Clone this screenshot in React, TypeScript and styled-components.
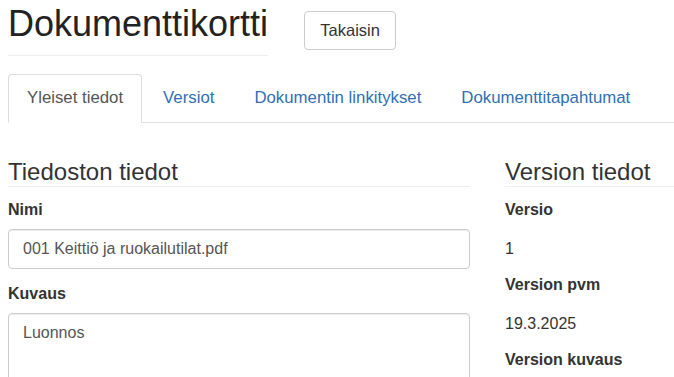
import React from "react";
import styled, {createGlobalStyle} from "styled-components";

const GlobalStyle = createGlobalStyle`
  html, body {
    margin: 0;
    padding: 0;
    overflow: hidden;
    background: #fff;
  }

  body {
    font-family: "Liberation Sans", Arial, Helvetica, sans-serif;
    font-size: 16px;
    line-height: 24px;
    color: #333;
  }
`;

const Page = styled.div`
  min-width: 1000px;
  padding-left: 8px;
`;

const Header = styled.div`
  display: flex;
  align-items: flex-start;
  gap: 36px;
`;

const Title = styled.h1`
  margin: 0;
  padding: 4px 0 11px;
  font-size: 36px;
  font-weight: 400;
  line-height: 40px;
  color: #222;
  border-bottom: 1px solid #eee;
`;

const Button = styled.button`
  box-sizing: border-box;
  width: 92px;
  margin-top: 11px;
  padding: 7px 0;
  font-family: inherit;
  font-size: 16.5px;
  line-height: 23px;
  color: #333;
  background: #fff;
  border: 1px solid #ccc;
  border-radius: 4px;
  cursor: pointer;
`;

const TabList = styled.ul`
  display: flex;
  list-style: none;
  margin: 18px 0 0;
  padding: 0;
  border-bottom: 1px solid #ddd;
`;

const Tab = styled.li<{ $active?: boolean }>`
  margin: 0 2px -1px 0;
  padding: 11px 18px 12px;
  font-size: 16.8px;
  border: 1px solid ${p => (p.$active ? "#ddd" : "transparent")};
  border-bottom-color: transparent;
  border-radius: 4px 4px 0 0;
  background: ${p => (p.$active ? "#fff" : "transparent")};
  color: ${p => (p.$active ? "#555" : "#2f6fb4")};
  cursor: pointer;
`;

const Content = styled.div`
  display: grid;
  grid-template-columns: 462px 1fr;
  column-gap: 35px;
  padding-top: 35px;
`;

const Section = styled.section``;

const SectionTitle = styled.h3`
  margin: 0;
  padding-bottom: 1px;
  font-size: 24px;
  font-weight: 400;
  line-height: 27px;
  color: #333;
  border-bottom: 1px solid #eee;
`;

const Fields = styled.div`
  margin-top: 11px;
`;

const FormGroup = styled.div`
  margin-bottom: 13px;
`;

const Label = styled.label`
  display: block;
  margin: 0 0 7px;
  font-weight: 700;
`;

const Input = styled.input`
  box-sizing: border-box;
  display: block;
  width: 100%;
  height: 40px;
  padding: 7px 14px;
  font-family: inherit;
  font-size: 16px;
  line-height: 24px;
  color: #555;
  border: 1px solid #ccc;
  border-radius: 4px;
  box-shadow: inset 0 1px 1px rgba(0, 0, 0, 0.075);
`;

const TextArea = styled.textarea`
  box-sizing: border-box;
  display: block;
  width: 100%;
  height: 110px;
  padding: 7px 14px;
  font-family: inherit;
  font-size: 16px;
  line-height: 24px;
  color: #555;
  border: 1px solid #ccc;
  border-radius: 4px;
  box-shadow: inset 0 1px 1px rgba(0, 0, 0, 0.075);
  resize: vertical;
`;

const Details = styled.dl`
  margin: 11px 0 0;
`;

const Term = styled.dt`
  margin-bottom: 15px;
  font-weight: 700;
`;

const Value = styled.dd`
  margin: 0 0 12px;
`;

const tabs = ["Yleiset tiedot", "Versiot", "Dokumentin linkitykset", "Dokumenttitapahtumat"];

const App: React.FC = () => {
    return (
        <Page>
            <GlobalStyle/>
            <Header>
                <Title>Dokumenttikortti</Title>
                <Button>Takaisin</Button>
            </Header>
            <TabList>
                {tabs.map((t, i) => (
                    <Tab key={t} $active={i === 0}>{t}</Tab>
                ))}
            </TabList>
            <Content>
                <Section>
                    <SectionTitle>Tiedoston tiedot</SectionTitle>
                    <Fields>
                        <FormGroup>
                            <Label>Nimi</Label>
                            <Input defaultValue="001 Keittiö ja ruokailutilat.pdf"/>
                        </FormGroup>
                        <FormGroup>
                            <Label>Kuvaus</Label>
                            <TextArea defaultValue="Luonnos"/>
                        </FormGroup>
                    </Fields>
                </Section>
                <Section>
                    <SectionTitle>Version tiedot</SectionTitle>
                    <Details>
                        <Term>Versio</Term>
                        <Value>1</Value>
                        <Term>Version pvm</Term>
                        <Value>19.3.2025</Value>
                        <Term>Version kuvaus</Term>
                        <Value></Value>
                    </Details>
                </Section>
            </Content>
        </Page>
    );
};

export default App;
